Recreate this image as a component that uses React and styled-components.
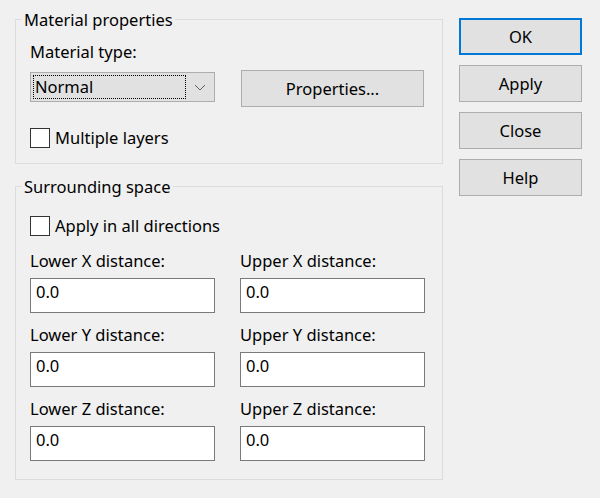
import React from "react";
import styled, { createGlobalStyle } from "styled-components";

const GlobalStyle = createGlobalStyle`
  html, body {
    margin: 0;
    padding: 0;
    background: #f0f0f0;
  }
  body {
    font-family: "Noto Sans", "Open Sans", sans-serif;
    font-size: 16.5px;
    color: #000;
  }
`;

const Dialog = styled.div`
  width: 600px;
  height: 498px;
  box-sizing: border-box;
  padding: 9px 0 0 15px;
  display: flex;
  gap: 16px;
  background: #f0f0f0;
`;

const LeftColumn = styled.div`
  width: 428px;
  display: flex;
  flex-direction: column;
  gap: 12px;
`;

const RightColumn = styled.div`
  padding-top: 9px;
  display: flex;
  flex-direction: column;
  gap: 10px;
`;

const GroupBox = styled.fieldset`
  margin: 0;
  padding: 0;
  min-width: 0;
  border: 1px solid #dcdcdc;
`;

const GroupTitle = styled.legend`
  margin-left: 6px;
  padding: 0 2px;
  line-height: 21px;
  font-size: 16.5px;
`;

const GroupBody = styled.div`
  padding: ${(p) => p.$pad};
  display: flex;
  flex-direction: column;
`;

const Label = styled.div`
  line-height: 20px;
  white-space: nowrap;
  margin-bottom: ${(p) => p.$mb || 0}px;
`;

const Row = styled.div`
  display: flex;
  align-items: flex-start;
  gap: 26px;
  margin-top: ${(p) => p.$mt || 0}px;
`;

const Combo = styled.div`
  margin-top: 2px;
  width: 185px;
  height: 30px;
  box-sizing: border-box;
  border: 1px solid #adadad;
  background: #e1e1e1;
  padding: 2px;
  display: flex;
  align-items: center;
`;

const FocusBox = styled.div`
  width: 153px;
  height: 24px;
  box-sizing: border-box;
  border: 1px dotted #000;
  padding-left: 1px;
  line-height: 20px;
  display: flex;
  align-items: center;
`;

const ArrowSlot = styled.div`
  flex: 1;
  display: flex;
  justify-content: center;
  align-items: center;
  height: 100%;
  padding-left: 2px;
`;

const Button = styled.button`
  width: ${(p) => p.$w}px;
  height: 37px;
  box-sizing: border-box;
  margin: 0;
  padding: 0;
  background: #e1e1e1;
  border: ${(p) => (p.$default ? "2px solid #0078d7" : "1px solid #adadad")};
  font-family: inherit;
  font-size: 16.5px;
  line-height: 20px;
  color: #000;
  text-align: center;
`;

const CheckRow = styled.label`
  display: flex;
  align-items: center;
  gap: 5px;
  height: 20px;
  line-height: 20px;
  margin-top: ${(p) => p.$mt || 0}px;
  white-space: nowrap;
`;

const CheckBox = styled.span`
  width: 20px;
  height: 20px;
  box-sizing: border-box;
  border: 1px solid #333333;
  background: #ffffff;
  flex: none;
`;

const FieldGrid = styled.div`
  margin-top: 15px;
  display: grid;
  grid-template-columns: 185px 185px;
  column-gap: 25px;
  row-gap: 12px;
`;

const Field = styled.div`
  display: flex;
  flex-direction: column;
`;

const TextInput = styled.input`
  width: 185px;
  height: 35px;
  box-sizing: border-box;
  margin: 0;
  border: 1px solid #7a7a7a;
  background: #ffffff;
  padding: 3px 5px 11px 5px;
  font-family: inherit;
  font-size: 16.5px;
  line-height: 19px;
  color: #000;
  outline: none;
`;

const Chevron = () => (
  <svg width="12" height="7" viewBox="0 0 12 7">
    <polyline
      points="1,1 6,6 11,1"
      fill="none"
      stroke="#606060"
      strokeWidth="1"
    />
  </svg>
);

const fields = [
  ["Lower X distance:", "Upper X distance:"],
  ["Lower Y distance:", "Upper Y distance:"],
  ["Lower Z distance:", "Upper Z distance:"],
];

export default function App() {
  return (
    <>
      <GlobalStyle />
      <Dialog>
        <LeftColumn>
          <GroupBox>
            <GroupTitle>Material properties</GroupTitle>
            <GroupBody $pad="12px 14px 15px 14px">
              <Label>Material type:</Label>
              <Row $mt={8}>
                <Combo>
                  <FocusBox>Normal</FocusBox>
                  <ArrowSlot>
                    <Chevron />
                  </ArrowSlot>
                </Combo>
                <Button $w={183}>Properties...</Button>
              </Row>
              <CheckRow $mt={21}>
                <CheckBox />
                Multiple layers
              </CheckRow>
            </GroupBody>
          </GroupBox>
          <GroupBox>
            <GroupTitle>Surrounding space</GroupTitle>
            <GroupBody $pad="19px 14px 18px 14px">
              <CheckRow>
                <CheckBox />
                Apply in all directions
              </CheckRow>
              <FieldGrid>
                {fields.flat().map((label) => (
                  <Field key={label}>
                    <Label $mb={7}>{label}</Label>
                    <TextInput defaultValue="0.0" readOnly />
                  </Field>
                ))}
              </FieldGrid>
            </GroupBody>
          </GroupBox>
        </LeftColumn>
        <RightColumn>
          <Button $w={123} $default>OK</Button>
          <Button $w={123}>Apply</Button>
          <Button $w={123}>Close</Button>
          <Button $w={123}>Help</Button>
        </RightColumn>
      </Dialog>
    </>
  );
}
